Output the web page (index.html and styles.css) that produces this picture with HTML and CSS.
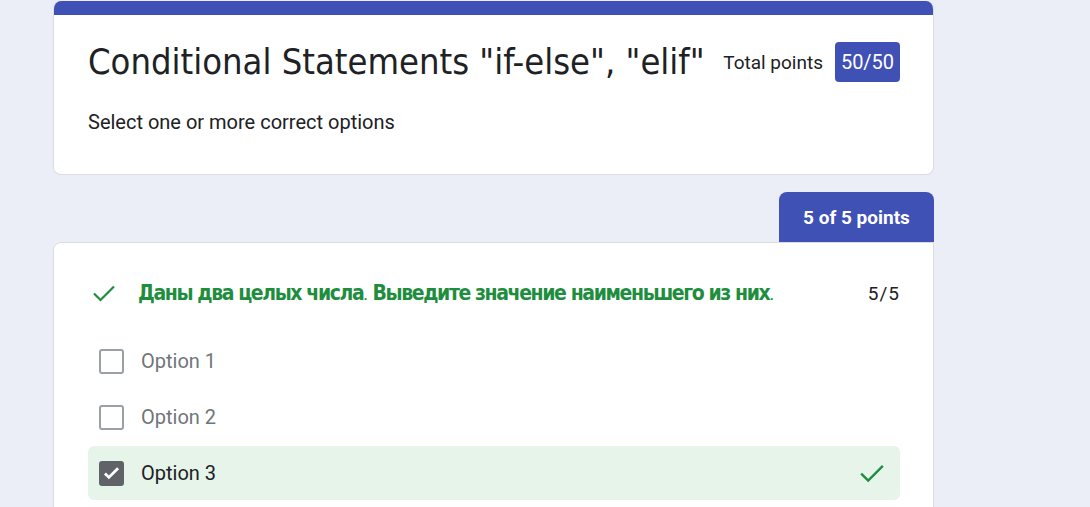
FILE: index.html
```html
<!DOCTYPE html>
<html lang="en">
<head>
<meta charset="utf-8">
<title>Conditional Statements</title>
<link rel="stylesheet" href="styles.css">
</head>
<body>
<main class="page">
  <section class="card header-card">
    <div class="band"></div>
    <div class="header-body">
      <div class="title-row">
        <h1 class="title">Conditional Statements "if-else", "elif"</h1>
        <span class="total-label">Total points</span>
        <span class="total-badge">50/50</span>
      </div>
      <p class="subtitle">Select one or more correct options</p>
    </div>
  </section>

  <section class="question">
    <div class="points-tab">5 of 5 points</div>
    <div class="card question-card">
      <div class="q-head">
        <svg class="q-check" viewBox="0 0 24 24" width="24" height="24"><path d="M2 12.5l6.5 6.5L22 5.5" fill="none" stroke="#1e8e3e" stroke-width="2.2"/></svg>
        <div class="q-text"><span class="q-strong">Даны два целых числа</span>. <span class="q-strong">Выведите значение наименьшего из них</span>.</div>
        <div class="q-score">5/5</div>
      </div>
      <ul class="options">
        <li class="option">
          <span class="box"></span>
          <span class="opt-label">Option 1</span>
        </li>
        <li class="option">
          <span class="box"></span>
          <span class="opt-label">Option 2</span>
        </li>
        <li class="option option-correct">
          <span class="box box-checked"><svg viewBox="0 0 24 24" width="24" height="24"><path d="M4.5 12.5l4.5 4.5L19.5 6.5" fill="none" stroke="#fff" stroke-width="3.2"/></svg></span>
          <span class="opt-label opt-dark">Option 3</span>
          <svg class="opt-check" viewBox="0 0 24 24" width="26" height="26"><path d="M2 12.5l6.5 6.5L22 5.5" fill="none" stroke="#1e8e3e" stroke-width="2.2"/></svg>
        </li>
      </ul>
    </div>
  </section>
</main>
</body>
</html>
```

FILE: styles.css
```css
html, body {
  margin: 0;
  padding: 0;
  background: #ebedf7;
  font-family: Roboto, "Liberation Sans", Arial, sans-serif;
  color: #202124;
}

.page {
  width: 881px;
  padding: 1px 0 0 53px;
  display: flex;
  flex-direction: column;
}

.card {
  background: #fff;
  border: 1px solid #dadce0;
  border-radius: 8px;
}

.header-card {
  overflow: hidden;
  height: 174px;
  box-sizing: border-box;
  border-top: none;
}

.band {
  height: 14px;
  background: #3f51b5;
}

.header-body {
  padding: 27px 33px 0 34px;
}

.title-row {
  display: flex;
  align-items: center;
  height: 40px;
}

.title {
  margin: 0;
  font-family: "DejaVu Sans Condensed", "Liberation Sans Narrow", sans-serif;
  font-weight: 400;
  font-size: 36px;
  line-height: 40px;
  color: #202124;
  white-space: nowrap;
  flex: none;
}

.total-label {
  margin-left: auto;
  font-size: 19px;
  color: #202124;
  white-space: nowrap;
  flex: none;
}

.total-badge {
  margin-left: 12px;
  background: #3f51b5;
  color: #fff;
  font-size: 20px;
  height: 40px;
  width: 65px;
  border-radius: 4px;
  display: flex;
  align-items: center;
  justify-content: center;
  flex: none;
}

.subtitle {
  margin: 28px 0 0;
  font-size: 20px;
  line-height: 24px;
  color: #202124;
}

.question {
  margin-top: 17px;
  display: flex;
  flex-direction: column;
  align-items: flex-end;
}

.points-tab {
  width: 155px;
  height: 50px;
  background: #3f51b5;
  color: #fff;
  font-weight: 700;
  font-size: 19px;
  border-radius: 8px 8px 0 0;
  display: flex;
  align-items: center;
  justify-content: center;
}

.question-card {
  align-self: stretch;
  border-top-right-radius: 0;
  padding: 38px 33px 10px 34px;
  height: 300px;
}

.q-head {
  display: flex;
  align-items: center;
  height: 24px;
}

.q-check {
  margin-left: 4px;
  flex: none;
}

.q-text {
  margin-left: 22px;
  flex: 1;
  font-size: 18px;
  color: #1e8e3e;
  white-space: nowrap;
}

.q-strong {
  font-family: "DejaVu Sans Condensed", "Liberation Sans Narrow", sans-serif;
  font-weight: 700;
  font-size: 21px;
  letter-spacing: -1.4px;
}

.q-score {
  font-size: 19px;
  color: #202124;
  letter-spacing: 1px;
}

.options {
  list-style: none;
  margin: 29px 0 0;
  padding: 0;
}

.option {
  height: 54px;
  margin-bottom: 2px;
  padding: 0 15px 0 11px;
  display: flex;
  align-items: center;
  border-radius: 6px;
}

.box {
  width: 25px;
  height: 25px;
  box-sizing: border-box;
  border: 2px solid #9aa0a6;
  border-radius: 3px;
  flex: none;
  display: flex;
  align-items: center;
  justify-content: center;
}

.box-checked {
  background: #5f6368;
  border-color: #5f6368;
}

.opt-label {
  margin-left: 17px;
  font-size: 20px;
  color: #70757a;
  flex: 1;
}

.opt-dark {
  color: #202124;
}

.option-correct {
  background: #e6f4ea;
}

.opt-check {
  flex: none;
}
```
